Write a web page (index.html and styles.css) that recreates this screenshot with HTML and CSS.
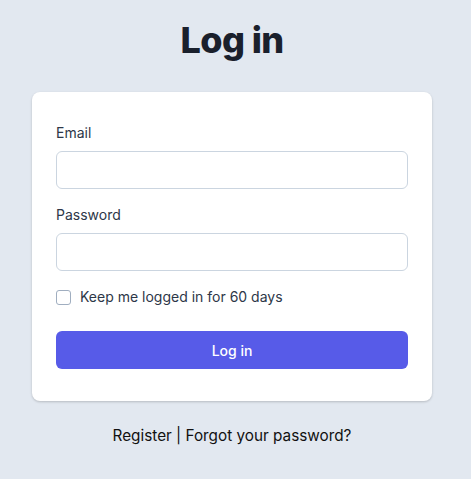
FILE: index.html
```html
<!DOCTYPE html>
<html>
<head>
<meta charset="utf-8">
<link rel="stylesheet" href="styles.css">
</head>
<body>
<main class="page">
  <h1 class="title">Log in</h1>
  <form class="card">
    <label class="field">
      <span class="label">Email</span>
      <input class="input" type="email">
    </label>
    <label class="field">
      <span class="label">Password</span>
      <input class="input" type="password">
    </label>
    <label class="remember">
      <span class="checkbox"></span>
      <span class="remember-text">Keep me logged in for 60 days</span>
    </label>
    <button class="button" type="button">Log in</button>
  </form>
  <p class="links">Register | Forgot your password?</p>
</main>
</body>
</html>
```
FILE: styles.css
```css
html, body {
  margin: 0;
  padding: 0;
  background: #e2e8f0;
  font-family: Inter, "Noto Sans", sans-serif;
}
.page {
  display: flex;
  flex-direction: column;
  align-items: center;
  padding-top: 18px;
  padding-right: 7px;
}
.title {
  margin: 0;
  font-size: 36px;
  line-height: 44px;
  font-weight: 800;
  color: #1a202c;
  letter-spacing: -0.6px;
}
.card {
  margin-top: 30px;
  width: 400px;
  box-sizing: border-box;
  background: #fff;
  border-radius: 8px;
  box-shadow: 0 1px 3px rgba(0,0,0,0.12), 0 1px 2px rgba(0,0,0,0.08);
  padding: 31px 24px 32px;
  display: flex;
  flex-direction: column;
}
.field {
  display: flex;
  flex-direction: column;
  gap: 8px;
  margin-bottom: 16px;
}
.label {
  font-size: 14px;
  line-height: 20px;
  color: #2d3748;
}
.input {
  height: 38px;
  box-sizing: border-box;
  border: 1px solid #cbd5e0;
  border-radius: 6px;
  background: #fff;
  margin: 0;
  padding: 8px 12px;
  font: inherit;
}
.remember {
  display: flex;
  align-items: center;
  gap: 9px;
  height: 20px;
  margin-bottom: 24px;
}
.checkbox {
  width: 13px;
  height: 13px;
  border: 1px solid #a0aec0;
  border-radius: 3px;
  background: #fff;
}
.remember-text {
  font-size: 14px;
  line-height: 20px;
  color: #2d3748;
}
.button {
  height: 38px;
  border: 0;
  border-radius: 6px;
  background: #575be8;
  color: #fff;
  font: inherit;
  font-size: 14px;
  font-weight: 500;
}
.links {
  margin: 23px 0 0;
  font-size: 15.3px;
  line-height: 24px;
  color: #111;
}
```
